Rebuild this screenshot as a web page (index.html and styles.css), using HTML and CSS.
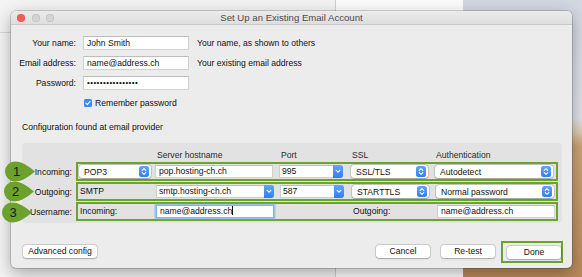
FILE: index.html
```html
<!DOCTYPE html>
<html lang="en">
<head>
    <meta charset="UTF-8">
    <title>Set Up an Existing Email Account</title>
    <link rel="stylesheet" href="styles.css">
</head>
<body>
    <!-- desktop behind the dialog -->
    <div class="desktop">
        <div class="app-window">
            <div class="app-side"><div class="app-toolbar"></div></div>
            <div class="app-main"></div>
        </div>
        <div class="wallpaper"></div>
    </div>

    <div class="dialog">
        <div class="titlebar">
            <div class="lights">
                <span class="light red"></span>
                <span class="light"></span>
                <span class="light"></span>
            </div>
            <div class="title">Set Up an Existing Email Account</div>
            <div></div>
        </div>

        <div class="content">
            <!-- account fields -->
            <div class="account">
                <span class="label">Your name:</span>
                <div class="field">John Smith</div>
                <span class="hint">Your name, as shown to others</span>

                <span class="label">Email address:</span>
                <div class="field">name@address.ch</div>
                <span class="hint">Your existing email address</span>

                <span class="label">Password:</span>
                <div class="field dots">&bull;&bull;&bull;&bull;&bull;&bull;&bull;&bull;&bull;&bull;&bull;&bull;&bull;&bull;&bull;&bull;</div>
                <span></span>

                <div class="remember">
                    <svg class="check" width="8" height="8" viewBox="0 0 8 8">
                        <rect width="8" height="8" rx="1.6" fill="#3a8bf4"/>
                        <path d="M1.9 4.1 L3.3 5.6 L6.1 2.3" fill="none" stroke="#fff" stroke-width="1.1" stroke-linecap="round" stroke-linejoin="round"/>
                    </svg>
                    <span>Remember password</span>
                </div>
            </div>

            <p class="found">Configuration found at email provider</p>

            <!-- server settings -->
            <div class="panel">
                <div class="shead">
                    <span class="col-proto"></span>
                    <span class="col-host">Server hostname</span>
                    <span class="col-port">Port</span>
                    <span class="col-ssl">SSL</span>
                    <span class="col-auth">Authentication</span>
                </div>

                <div class="srow">
                    <span class="srow-label">Incoming:</span>
                    <div class="srow-box">
                        <div class="popup col-proto">POP3<span class="stepper"><svg width="10" height="11" viewBox="0 0 10 11"><path d="M3.2 4.3 L5 2.6 L6.8 4.3 M3.2 6.7 L5 8.4 L6.8 6.7" fill="none" stroke="#fff" stroke-width="1.1" stroke-linecap="round" stroke-linejoin="round"/></svg></span></div>
                        <div class="field col-host">pop.hosting-ch.ch</div>
                        <div class="combo col-port"><span class="combo-text">995</span><span class="drop"><svg width="10" height="13" viewBox="0 0 10 13"><path d="M3.2 5.4 L5 7.2 L6.8 5.4" fill="none" stroke="#fff" stroke-width="1.2" stroke-linecap="round" stroke-linejoin="round"/></svg></span></div>
                        <div class="popup col-ssl">SSL/TLS<span class="stepper"><svg width="10" height="11" viewBox="0 0 10 11"><path d="M3.2 4.3 L5 2.6 L6.8 4.3 M3.2 6.7 L5 8.4 L6.8 6.7" fill="none" stroke="#fff" stroke-width="1.1" stroke-linecap="round" stroke-linejoin="round"/></svg></span></div>
                        <div class="popup col-auth">Autodetect<span class="stepper"><svg width="10" height="11" viewBox="0 0 10 11"><path d="M3.2 4.3 L5 2.6 L6.8 4.3 M3.2 6.7 L5 8.4 L6.8 6.7" fill="none" stroke="#fff" stroke-width="1.1" stroke-linecap="round" stroke-linejoin="round"/></svg></span></div>
                    </div>
                </div>

                <div class="srow">
                    <span class="srow-label">Outgoing:</span>
                    <div class="srow-box">
                        <span class="plain col-proto">SMTP</span>
                        <div class="combo col-host"><span class="combo-text">smtp.hosting-ch.ch</span><span class="drop"><svg width="10" height="13" viewBox="0 0 10 13"><path d="M3.2 5.4 L5 7.2 L6.8 5.4" fill="none" stroke="#fff" stroke-width="1.2" stroke-linecap="round" stroke-linejoin="round"/></svg></span></div>
                        <div class="combo col-port"><span class="combo-text">587</span><span class="drop"><svg width="10" height="13" viewBox="0 0 10 13"><path d="M3.2 5.4 L5 7.2 L6.8 5.4" fill="none" stroke="#fff" stroke-width="1.2" stroke-linecap="round" stroke-linejoin="round"/></svg></span></div>
                        <div class="popup col-ssl">STARTTLS<span class="stepper"><svg width="10" height="11" viewBox="0 0 10 11"><path d="M3.2 4.3 L5 2.6 L6.8 4.3 M3.2 6.7 L5 8.4 L6.8 6.7" fill="none" stroke="#fff" stroke-width="1.1" stroke-linecap="round" stroke-linejoin="round"/></svg></span></div>
                        <div class="popup col-auth">Normal password<span class="stepper"><svg width="10" height="11" viewBox="0 0 10 11"><path d="M3.2 4.3 L5 2.6 L6.8 4.3 M3.2 6.7 L5 8.4 L6.8 6.7" fill="none" stroke="#fff" stroke-width="1.1" stroke-linecap="round" stroke-linejoin="round"/></svg></span></div>
                    </div>
                </div>

                <div class="srow">
                    <span class="srow-label">Username:</span>
                    <div class="srow-box">
                        <span class="plain col-proto">Incoming:</span>
                        <div class="field focused col-host">name@address.ch<span class="caret"></span></div>
                        <span class="col-port"></span>
                        <span class="plain col-ssl">Outgoing:</span>
                        <div class="field col-auth">name@address.ch</div>
                    </div>
                </div>
            </div>

            <!-- buttons -->
            <div class="footer">
                <button class="btn btn-wide">Advanced config</button>
                <div class="spacer"></div>
                <button class="btn">Cancel</button>
                <button class="btn retest">Re-test</button>
                <div class="done-box"><button class="btn">Done</button></div>
            </div>
        </div>
    </div>

    <!-- numbered callouts -->
    <svg class="callout c1" width="32" height="21" viewBox="0 0 32 21">
        <path d="M11 0.5 C18.5 0.5 24 5 31 10.5 C24 16 18.5 20.5 11 20.5 A10 10 0 0 1 11 0.5 Z" fill="#6ba12c"/>
        <text x="12.5" y="15" text-anchor="middle">1</text>
    </svg>
    <svg class="callout c2" width="32" height="21" viewBox="0 0 32 21">
        <path d="M11 0.5 C18.5 0.5 24 5 31 10.5 C24 16 18.5 20.5 11 20.5 A10 10 0 0 1 11 0.5 Z" fill="#6ba12c"/>
        <text x="12.5" y="15" text-anchor="middle">2</text>
    </svg>
    <svg class="callout c3" width="32" height="21" viewBox="0 0 32 21">
        <path d="M11 0.5 C18.5 0.5 24 5 31 10.5 C24 16 18.5 20.5 11 20.5 A10 10 0 0 1 11 0.5 Z" fill="#6ba12c"/>
        <text x="12" y="15" text-anchor="middle">3</text>
    </svg>
</body>
</html>
```

FILE: styles.css
```css
/* page */
body {
    margin: 0;
    width: 582px;
    height: 277px;
    overflow: hidden;
    position: relative;
    font-family: "Liberation Sans", Arial, sans-serif;
    font-size: 8.6px;
    color: #111;
}

/* desktop behind */
.desktop {
    display: flex;
    height: 277px;
}

.app-window {
    width: 463px;
    display: flex;
    background: #f3f3f3;
}

.app-side {
    width: 335px;
    border-right: 1px solid #cfcfcf;
}

.app-toolbar {
    height: 32px;
    border-bottom: 1px solid #d8d8d8;
}

.app-main {
    flex: 1;
    background: #fbfbfb;
}

.wallpaper {
    flex: 1;
    background: linear-gradient(180deg, #d2d6e0 0px, #dfe1e8 118px, #dccab0 132px, #c9a376 146px, #b8895a 277px);
}

/* dialog window */
.dialog {
    position: absolute;
    left: 11px;
    top: 11px;
    width: 561px;
    height: 257px;
    background: #ececec;
    border-radius: 5px;
    box-shadow: 0 0 0 0.5px rgba(0, 0, 0, 0.3), 0 5px 16px rgba(0, 0, 0, 0.32);
    overflow: hidden;
    display: flex;
    flex-direction: column;
}

.titlebar {
    height: 16px;
    box-sizing: border-box;
    display: grid;
    grid-template-columns: 60px 1fr 60px;
    align-items: center;
    background: linear-gradient(#ebebeb, #dedede);
    border-bottom: 1px solid #c8c8c8;
}

.lights {
    display: flex;
    gap: 6.5px;
    padding-left: 6px;
}

.light {
    width: 8px;
    height: 8px;
    border-radius: 50%;
    background: #d3d3d3;
    box-shadow: inset 0 0 0 0.5px rgba(0, 0, 0, 0.12);
}

.light.red {
    background: #fb5b55;
}

.title {
    text-align: center;
    font-size: 9.6px;
    color: #4a4a4a;
    white-space: nowrap;
}

.content {
    padding: 11px 10px 6px 11px;
}

/* account fields */
.account {
    display: grid;
    grid-template-columns: 58px 106px 1fr;
    grid-auto-rows: 14px;
    column-gap: 7px;
    row-gap: 6px;
    align-items: center;
    margin-left: -4px;
}

.label {
    text-align: right;
    white-space: nowrap;
}

.hint {
    margin-left: 1px;
    white-space: nowrap;
}

.field {
    height: 14px;
    box-sizing: border-box;
    background: #fff;
    border: 1px solid #d0d0d0;
    border-top-color: #bdbdbd;
    padding-left: 3px;
    line-height: 12px;
    white-space: nowrap;
    overflow: hidden;
}

.dots {
    letter-spacing: 0.4px;
    font-size: 8px;
}

.remember {
    grid-column: 2 / span 2;
    height: 12px;
    display: flex;
    align-items: center;
    gap: 3px;
    margin-left: 1px;
}

.found {
    margin: 12px 0 0;
    line-height: 10px;
}

/* server settings panel */
.panel {
    margin-top: 11px;
    width: 540px;
    height: 80px;
    box-sizing: border-box;
    padding-top: 7px;
    background: #e2e2e2;
    border-radius: 4px;
}

.shead {
    display: flex;
    height: 10px;
    line-height: 10px;
    margin-bottom: 2px;
    padding-left: 57px;
    color: #2a2a2a;
}

.shead span {
    padding-left: 2px;
    box-sizing: border-box;
}

.shead .col-proto { width: 76px; }
.shead .col-host { width: 124px; }
.shead .col-port { width: 72px; }
.shead .col-ssl { width: 84px; padding-left: 1px; }
.shead .col-auth { padding-left: 1px; }

.srow {
    display: flex;
    align-items: center;
    margin-bottom: 1px;
}

.srow-label {
    width: 50px;
    margin-right: 4px;
    text-align: right;
    white-space: nowrap;
}

.srow-box {
    width: 482px;
    box-sizing: border-box;
    display: flex;
    align-items: center;
    padding: 1px;
    border: 2px solid #6aa42e;
}

.srow-box > * {
    height: 13px;
    flex: none;
}

.srow-box .col-proto { width: 72px; margin-right: 4px; }
.srow-box .col-host { width: 118px; margin-right: 6px; }
.srow-box .col-port { width: 64px; margin-right: 8px; }
.srow-box .col-ssl { width: 77px; margin-right: 7px; }
.srow-box .col-auth { width: 118px; }

.srow-box .field {
    height: 13px;
    line-height: 11px;
}

.plain {
    line-height: 13px;
    padding-left: 1px;
}

.focused {
    border-color: #7fb2f0;
    box-shadow: 0 0 0 1.5px rgba(110, 165, 240, 0.55);
}

.caret {
    display: inline-block;
    width: 1px;
    height: 9px;
    background: #111;
    vertical-align: -1px;
}

/* popup button with stepper */
.popup {
    box-sizing: border-box;
    display: flex;
    align-items: center;
    justify-content: space-between;
    padding-left: 5px;
    padding-right: 2px;
    background: #fff;
    border-radius: 3px;
    box-shadow: 0 0 0 0.5px rgba(0, 0, 0, 0.22), 0 0.5px 1.5px rgba(0, 0, 0, 0.2);
}

.stepper {
    width: 10px;
    height: 11px;
    border-radius: 2.5px;
    background: linear-gradient(#62a5fb, #2f7ff3);
    display: flex;
}

/* combo box with drop arrow */
.combo {
    box-sizing: border-box;
    display: flex;
    background: #fff;
    border: 1px solid #cdcdcd;
    border-top-color: #bdbdbd;
    border-radius: 0 3px 3px 0;
}

.combo-text {
    flex: 1;
    padding-left: 2px;
    line-height: 11px;
}

.drop {
    width: 10px;
    margin: -1px -1px -1px 0;
    border-radius: 0 3px 3px 0;
    background: linear-gradient(#62a5fb, #2f7ff3);
    display: flex;
}

/* buttons */
.footer {
    margin-top: 18px;
    margin-right: -1px;
    height: 21px;
    display: flex;
    align-items: center;
}

.spacer {
    flex: 1;
}

.btn {
    width: 54px;
    height: 13px;
    padding: 0;
    border: none;
    border-radius: 3px;
    background: #fff;
    box-shadow: 0 0 0 0.5px rgba(0, 0, 0, 0.2), 0 0.5px 1.5px rgba(0, 0, 0, 0.22);
    font-family: "Liberation Sans", Arial, sans-serif;
    font-size: 8.6px;
    color: #111;
    line-height: 13px;
}

.btn-wide {
    width: 74px;
    margin-left: 1px;
}

.retest {
    margin-left: 11px;
}

.done-box {
    margin-left: 6px;
    padding: 3px 0 2px 4px;
    border: 2px solid #6aa42e;
    display: flex;
}

/* numbered callouts */
.callout {
    position: absolute;
}

.callout text {
    font-family: "Liberation Sans", Arial, sans-serif;
    font-size: 13px;
    fill: #1a1a1a;
}

.c1 { left: 4px; top: 161px; }
.c2 { left: 3px; top: 181px; }
.c3 { left: 1px; top: 202px; }
```
